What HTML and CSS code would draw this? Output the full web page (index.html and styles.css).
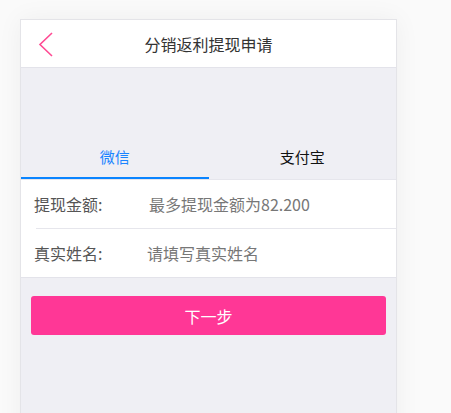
FILE: index.html
```html
<!DOCTYPE html>
<html lang="zh-CN">
<head>
<meta charset="utf-8">
<title>分销返利提现申请</title>
<link rel="stylesheet" href="styles.css">
</head>
<body>
<div class="phone">
  <header class="header">
    <a class="back" href="#" aria-label="返回">
      <svg width="16" height="25" viewBox="0 0 16 25"><polyline points="14,1 2,12.5 14,24" fill="none" stroke="#ff4a93" stroke-width="1.6"/></svg>
    </a>
    <h1 class="title">分销返利提现申请</h1>
  </header>
  <main class="body">
    <div class="spacer"></div>
    <div class="tabs">
      <div class="tab active">微信</div>
      <div class="tab">支付宝</div>
    </div>
    <div class="form">
      <div class="row">
        <label class="label">提现金额:</label>
        <input class="input" type="text" placeholder="最多提现金额为82.200">
      </div>
      <div class="row">
        <label class="label">真实姓名:</label>
        <input class="input" type="text" placeholder="请填写真实姓名">
      </div>
    </div>
    <button class="next" type="button">下一步</button>
  </main>
</div>
</body>
</html>
```

FILE: styles.css
```css
html, body {
  margin: 0;
  padding: 0;
}
body {
  background: #fafafa;
  font-family: "Noto Sans CJK SC", "Liberation Sans", sans-serif;
  overflow: hidden;
  height: 413px;
}
.phone {
  margin: 19px 0 0 20px;
  width: 375px;
  min-height: 420px;
  border: 1px solid #e4e4e8;
  background: #efeff4;
  box-shadow: 0 0 24px rgba(0, 0, 0, 0.05);
  display: flex;
  flex-direction: column;
}
.header {
  position: relative;
  height: 47px;
  background: #fff;
  border-bottom: 1px solid #e3e3ea;
  display: flex;
  align-items: center;
  justify-content: center;
}
.back {
  position: absolute;
  left: 17px;
  top: 12px;
  width: 16px;
  height: 25px;
  display: block;
}
.back svg { display: block; }
.title {
  margin: 0;
  font-size: 16px;
  font-weight: normal;
  color: #333;
  line-height: 46px;
}
.body {
  display: flex;
  flex-direction: column;
}
.spacer {
  height: 66px;
}
.tabs {
  display: flex;
  height: 45px;
}
.tab {
  flex: 1;
  display: flex;
  align-items: center;
  justify-content: center;
  font-size: 15px;
  color: #111;
  border-bottom: 2px solid transparent;
  box-sizing: border-box;
  padding-top: 2px;
}
.tab.active {
  color: #1a84ff;
  border-bottom-color: #0a84ff;
}
.form {
  background: #fff;
  border-top: 1px solid #e6e6ec;
  border-bottom: 1px solid #e3e3ea;
}
.row {
  display: flex;
  align-items: center;
  height: 48px;
  padding-left: 13px;
}
.row + .row {
  border-top: 1px solid #e6e6ec;
  margin-left: 15px;
  padding-left: 0;
}
.row + .row .label {
  width: 113px;
  margin-left: -2px;
}
.label {
  width: 115px;
  font-size: 16px;
  color: #555;
  flex-shrink: 0;
}
.input {
  flex: 1;
  min-width: 0;
  border: 0;
  outline: 0;
  padding: 0;
  font-family: inherit;
  font-size: 16px;
  color: #333;
  background: transparent;
}
.input::placeholder {
  color: #777;
}
.next {
  margin: 18px 10px 0;
  height: 39px;
  border: 0;
  border-radius: 3px;
  background: #ff3796;
  color: #fff;
  font-family: inherit;
  font-size: 16px;
  padding: 0;
}
```
